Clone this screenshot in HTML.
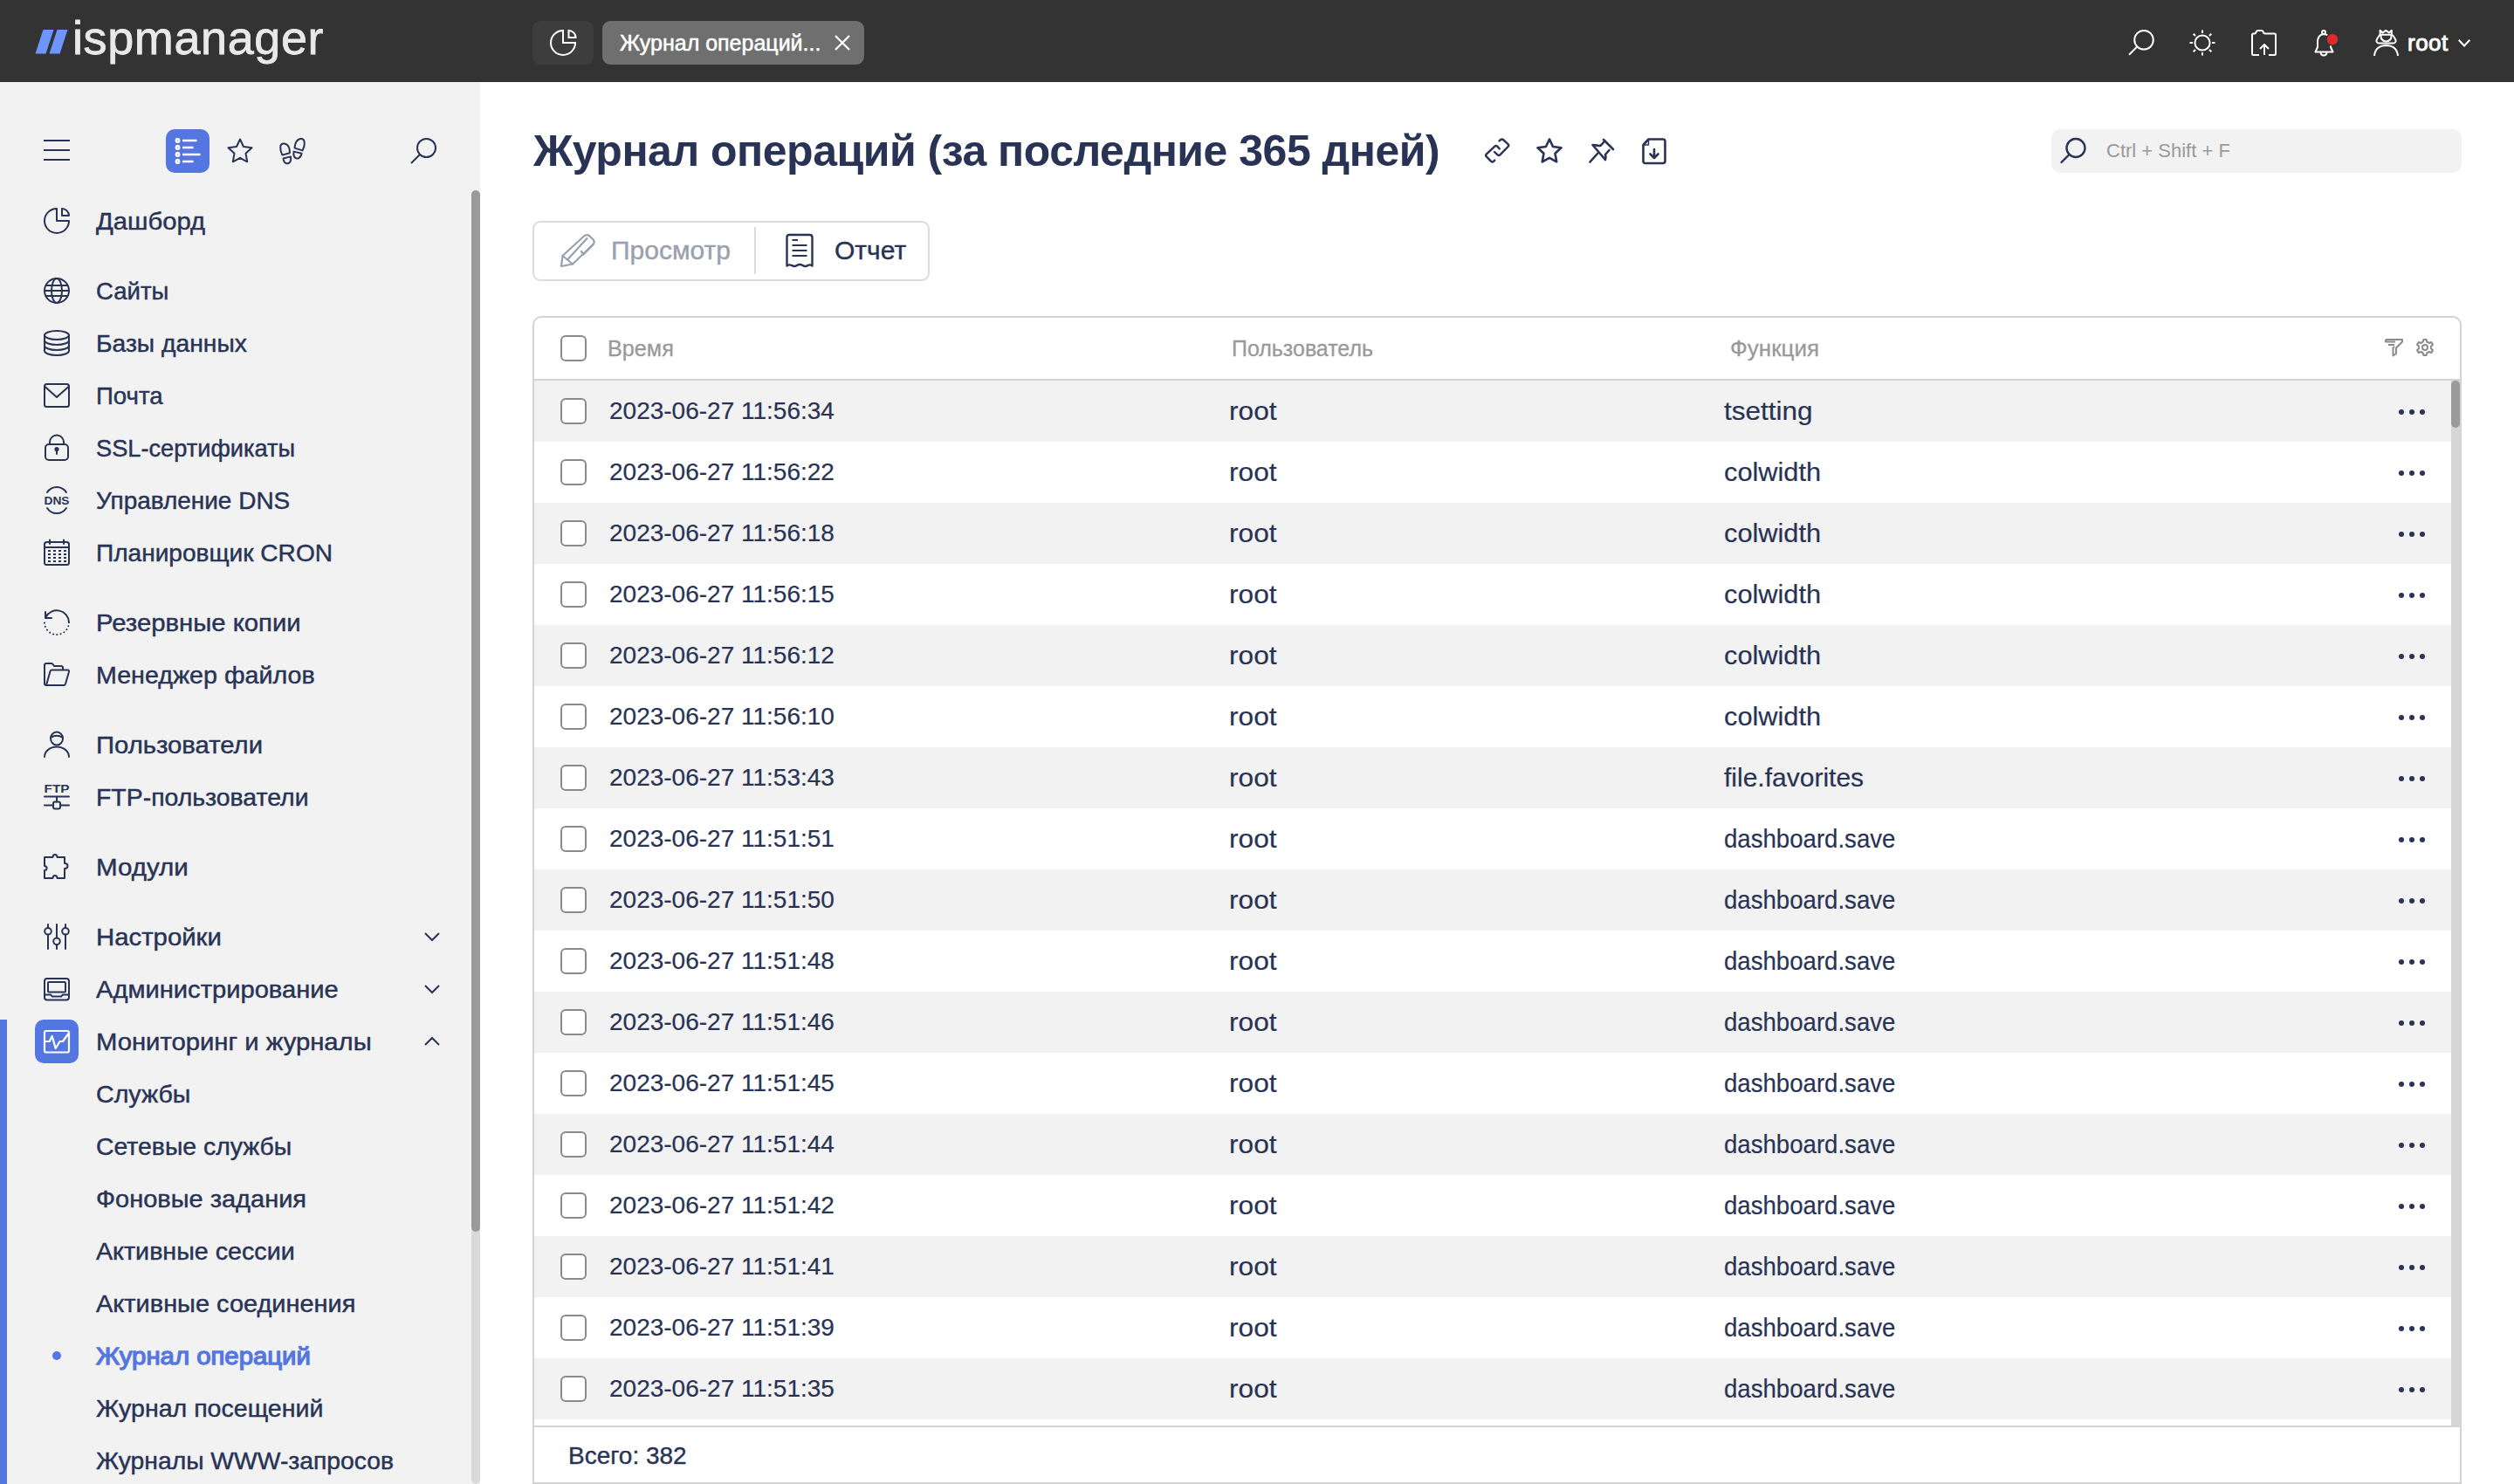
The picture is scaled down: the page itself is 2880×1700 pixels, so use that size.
<!DOCTYPE html>
<html><head><meta charset="utf-8">
<style>
*{box-sizing:border-box;margin:0;padding:0}
html,body{width:2880px;height:1700px;overflow:hidden;background:#fff;font-family:"Liberation Sans",sans-serif;color:#283355}
.abs{position:absolute}
#hdr{position:absolute;left:0;top:0;width:2880px;height:94px;background:#333333}
#side{position:absolute;left:0;top:94px;width:550px;height:1606px;background:#f2f2f2;overflow:hidden}
#main{position:absolute;left:550px;top:94px;width:2330px;height:1606px;background:#fff}
svg{position:absolute;overflow:visible}
.it{position:absolute;left:110px;font-size:28.5px;-webkit-text-stroke:0.45px currentColor;line-height:40px;white-space:nowrap;color:#283355}
.ic{position:absolute;left:50px;width:30px;height:30px}
.chev{position:absolute;left:486px;width:18px;height:10px}
.row{position:absolute;left:612px;width:2196px;height:70px}
.row.g{background:#f2f2f2}
.cb{position:absolute;left:30px;top:20px;width:30px;height:30px;border:2px solid #8a8a8a;border-radius:6px;background:#fff}
.t{position:absolute;font-size:30px;-webkit-text-stroke:0.2px currentColor;line-height:70px;top:0;white-space:nowrap;color:#283355}
.dots{position:absolute;left:2136px;top:32px;width:30px;height:6px}
.dots i{position:absolute;top:0;width:6px;height:6px;border-radius:50%;background:#283355}
</style></head><body>
<div id="hdr">
<svg style="left:0;top:0" width="100" height="94"><polygon points="49.5,34 61.5,34 52.5,61.5 40.5,61.5" fill="#6f96ff" /><polygon points="65.5,34 77.5,34 68.5,61.5 56.5,61.5" fill="#6f96ff" /></svg>
<div class="abs" id="logo" style="left:83px;top:8px;font-size:54px;line-height:70px;color:#e9e9e9;letter-spacing:0.6px;-webkit-text-stroke:0.8px #e9e9e9;white-space:nowrap">ispmanager</div>
<div class="abs" style="left:610px;top:24px;width:70px;height:50px;background:#3d3d3d;border-radius:9px"></div>
<svg style="left:630px;top:34px" width="30" height="30" viewBox="0 0 30 30" fill="none" stroke="#fff" stroke-width="2"><path d="M15 1 A14 14 0 1 0 29 15 H15 Z"/><path d="M21.5 1 A8 8 0 0 1 29.5 9 H21.5 Z"/></svg>
<div class="abs" style="left:690px;top:24px;width:300px;height:50px;background:#6f6f6f;border-radius:9px"></div>
<div class="abs" style="left:710px;top:24px;font-size:25px;line-height:50px;color:#fff;-webkit-text-stroke:0.5px #fff;white-space:nowrap">Журнал операций...</div>
<svg style="left:956px;top:40px" width="18" height="18" viewBox="0 0 18 18" stroke="#fff" stroke-width="2.2"><path d="M1 1 L17 17 M17 1 L1 17"/></svg>
<svg style="left:2438px;top:34px" width="30" height="30" viewBox="0 0 30 30" fill="none" stroke="#fff" stroke-width="2"><circle cx="18" cy="11.8" r="10.8"/><path d="M10.4 19.4 L1 28.8" stroke-linecap="butt"/></svg>
<svg style="left:2508px;top:34px" width="30" height="30" viewBox="0 0 30 30" fill="none" stroke="#fff" stroke-width="2"><circle cx="15" cy="15" r="8.6"/><path d="M15 0.5V4 M15 26V29.5 M0.5 15H4 M26 15H29.5 M4.7 4.7L7 7 M23 23L25.3 25.3 M25.3 4.7L23 7 M7 23L4.7 25.3"/></svg>
<svg style="left:2579px;top:34px" width="30" height="30" viewBox="0 0 30 30" fill="none" stroke="#fff" stroke-width="2" stroke-linejoin="round"><path d="M9 29 H2.5 Q1 29 1 27.5 V6 Q1 4.5 2.5 4.5 H4 Q5 4.5 5.5 3 L6 2 Q6.5 1 7.5 1 H12 Q13 1 13.5 2 L14.5 4 Q15 4.5 16 4.5 H26.5 Q28 4.5 28 6 V27.5 Q28 29 26.5 29 H20"/><path d="M15 29 V17 M10 22 L15 17 L20 22"/></svg>
<svg style="left:2651px;top:34px" width="30" height="30" viewBox="0 0 30 30" fill="none" stroke="#fff" stroke-width="2" stroke-linejoin="round"><circle cx="11" cy="3" r="2"/><path d="M11 5 Q4 6 4 14 V20 L1.5 25.5 H21.5 L19 20 V14 Q19 6 11 5 Z"/><path d="M7.5 25.5 Q7.5 29.5 11 29.5 Q14.5 29.5 14.5 25.5"/><circle cx="21" cy="11.2" r="7.6" fill="#333" stroke="none"/><circle cx="21" cy="11.2" r="6.2" fill="#dc2b2b" stroke="none"/></svg>
<svg style="left:2719px;top:34px" width="30" height="30" viewBox="0 0 30 30" fill="none" stroke="#fff" stroke-width="2" stroke-linejoin="round"><path d="M7.6 5.8 V0.8 L10.6 3.4 L14.2 0.9 L17.8 3.4 L20.8 0.8 V5.8 Z"/><path d="M7.5 6 Q6 7 3.5 12 Q3 15.5 7 15.5 H22 Q26 15.5 25.5 12 Q23 7 21.5 6"/><path d="M8.5 6 Q8 13 14.5 13.5 Q21 13 20.5 6"/><path d="M1 30 Q2 18.5 14.5 18 Q27 18.5 28 30"/></svg>
<div class="abs" style="left:2758px;top:24px;font-size:26px;line-height:50px;color:#fff;-webkit-text-stroke:0.9px #fff;letter-spacing:0.5px;white-space:nowrap">root</div>
<svg style="left:2816px;top:45px" width="14" height="9" viewBox="0 0 14 9" fill="none" stroke="#fff" stroke-width="2"><path d="M0.7 0.7 L7 7.5 L13.3 0.7"/></svg>
</div>
<div id="side">
<svg style="left:50px;top:66px" width="30" height="24" viewBox="0 0 30 24" stroke="#283355" stroke-width="2"><path d="M0 1H30M0 12H30M0 23H30"/></svg>
<div class="abs" style="left:190px;top:54px;width:50px;height:50px;background:#5476e0;border-radius:10px"></div>
<svg style="left:190px;top:54px" width="50" height="50" viewBox="0 0 50 50" fill="none" stroke="#fff" stroke-width="2.4"><rect x="11.8" y="11.2" width="3.4" height="3.6" rx="1.2"/><rect x="11.8" y="19.2" width="3.4" height="3.6" rx="1.2"/><rect x="11.8" y="27.2" width="3.4" height="3.6" rx="1.2"/><rect x="11.8" y="35.2" width="3.4" height="3.6" rx="1.2"/><path d="M19 13H35.5M19 21H31.5M19 29H39.5M19 37H31.5"/></svg>
<svg style="left:260px;top:64px" width="30" height="30" viewBox="0 0 30 30" fill="none" stroke="#283355" stroke-width="2" stroke-linejoin="round" stroke-linecap="round"><path d="M15 1.5 L19 10 L28.5 11.3 L21.5 17.8 L23.2 27.3 L15 22.8 L6.8 27.3 L8.5 17.8 L1.5 11.3 L11 10 Z"/></svg>
<svg style="left:320px;top:64px" width="30" height="30" viewBox="0 0 30 30" fill="none" stroke="#283355" stroke-width="2" stroke-linejoin="round" stroke-linecap="round"><path d="M3.4 19.6 Q1 14.5 1.2 10.5 Q1.5 6.3 5.3 6.5 Q9.8 6.8 11.3 11.8 Q12.2 15 11.8 17.3 Z"/><path d="M4.6 23.5 L13 21.4 Q13.8 25.5 12 28 Q10 30 7.5 29 Q5 28 4.6 23.5 Z"/><path d="M26.6 14.4 Q29.2 9.3 28.8 5.3 Q28.4 0.8 24.6 1 Q20.2 1.6 18.6 6.2 Q17.6 9.2 17.6 11.6 Z"/><path d="M16.5 15.6 L25.6 17.8 Q24.8 21.8 22.2 23.2 Q19.5 24.2 17.4 22 Q15.8 19.8 16.5 15.6 Z"/></svg>
<svg style="left:470px;top:64px" width="30" height="30" viewBox="0 0 30 30" fill="none" stroke="#283355" stroke-width="2"><circle cx="18.5" cy="11.5" r="10.5"/><path d="M11 19 L1 29"/></svg>
<div class="abs" style="left:540px;top:124px;width:10px;height:1482px;background:#d9d9d9;border-radius:5px"></div>
<div class="abs" style="left:540px;top:124px;width:10px;height:1193px;background:#9a9a9a;border-radius:5px"></div>
<div class="abs" style="left:0;top:1074px;width:8px;height:532px;background:#5476e0"></div>
<div class="abs" style="left:40px;top:1074px;width:50px;height:50px;background:#5476e0;border-radius:10px"></div>
<div class="it" style="left:110px;top:139px;color:#283355;font-weight:normal;transform:scaleX(1.025);transform-origin:0 50%">Дашборд</div>
<svg style="left:50px;top:144px" width="30" height="30" viewBox="0 0 30 30" fill="none" stroke="#283355" stroke-width="2" stroke-linejoin="round" stroke-linecap="round"><path d="M15 1 A14 14 0 1 0 29 15 H15 Z"/><path d="M21 1 A8 8 0 0 1 29 9 H21 Z"/></svg>
<div class="it" style="left:110px;top:219px;color:#283355;font-weight:normal;transform:scaleX(0.968);transform-origin:0 50%">Сайты</div>
<svg style="left:50px;top:224px" width="30" height="30" viewBox="0 0 30 30" fill="none" stroke="#283355" stroke-width="2" stroke-linejoin="round" stroke-linecap="round"><circle cx="15" cy="15" r="14"/><ellipse cx="15" cy="15" rx="6" ry="14"/><path d="M1 15H29M3 9H27M3 21H27"/></svg>
<div class="it" style="left:110px;top:279px;color:#283355;font-weight:normal;transform:scaleX(0.991);transform-origin:0 50%">Базы данных</div>
<svg style="left:50px;top:284px" width="30" height="30" viewBox="0 0 30 30" fill="none" stroke="#283355" stroke-width="2" stroke-linejoin="round" stroke-linecap="round"><ellipse cx="15" cy="6" rx="14" ry="5"/><path d="M1 6V24 A14 5 0 0 0 29 24 V6 M1 12 A14 5 0 0 0 29 12 M1 18 A14 5 0 0 0 29 18"/></svg>
<div class="it" style="left:110px;top:339px;color:#283355;font-weight:normal;transform:scaleX(0.969);transform-origin:0 50%">Почта</div>
<svg style="left:50px;top:344px" width="30" height="30" viewBox="0 0 30 30" fill="none" stroke="#283355" stroke-width="2" stroke-linejoin="round" stroke-linecap="round"><rect x="1" y="2" width="28" height="26" rx="2.5"/><path d="M1.5 5 L15 17 L28.5 5"/></svg>
<div class="it" style="left:110px;top:399px;color:#283355;font-weight:normal;transform:scaleX(0.955);transform-origin:0 50%">SSL-сертификаты</div>
<svg style="left:50px;top:404px" width="30" height="30" viewBox="0 0 30 30" fill="none" stroke="#283355" stroke-width="2" stroke-linejoin="round" stroke-linecap="round"><path d="M7 11 V8.5 A8 8 0 0 1 23 8.5 V11"/><rect x="2" y="11" width="26" height="18" rx="4"/><circle cx="15" cy="16.5" r="1.6" fill="#283355"/><path d="M15 17 V22"/></svg>
<div class="it" style="left:110px;top:459px;color:#283355;font-weight:normal;transform:scaleX(0.981);transform-origin:0 50%">Управление DNS</div>
<svg style="left:50px;top:464px" width="30" height="30" viewBox="0 0 30 30" fill="none" stroke="#283355" stroke-width="2" stroke-linejoin="round" stroke-linecap="round"><path d="M4 6 A13 13 0 0 1 26 6 M4 24 A13 13 0 0 0 26 24"/><text x="15" y="19.6" text-anchor="middle" font-family="Liberation Sans" font-weight="bold" font-size="13" fill="#283355" stroke="none" textLength="29" lengthAdjust="spacingAndGlyphs">DNS</text></svg>
<div class="it" style="left:110px;top:519px;color:#283355;font-weight:normal;transform:scaleX(0.985);transform-origin:0 50%">Планировщик CRON</div>
<svg style="left:50px;top:524px" width="30" height="30" viewBox="0 0 30 30" fill="none" stroke="#283355" stroke-width="2" stroke-linejoin="round" stroke-linecap="round"><rect x="1" y="3" width="28" height="26" rx="2.5"/><path d="M1 9H29M7 0.5V5M23 0.5V5"/><path d="M5 13H8M11 13H14M17 13H20M23 13H26M5 17H8M11 17H14M17 17H20M23 17H26M5 21H8M11 21H14M17 21H20M23 21H26M5 25H8M11 25H14M17 25H20M23 25H26" stroke-width="2.2" stroke-linecap="butt"/></svg>
<div class="it" style="left:110px;top:599px;color:#283355;font-weight:normal;transform:scaleX(1.027);transform-origin:0 50%">Резервные копии</div>
<svg style="left:50px;top:604px" width="30" height="30" viewBox="0 0 30 30" fill="none" stroke="#283355" stroke-width="2" stroke-linejoin="round" stroke-linecap="round"><path d="M2.5 9 A14 14 0 0 1 29 15"/><path d="M29 15 A14 14 0 0 1 1 15" stroke-dasharray="0.1 4.2"/><path d="M2 3 V10 H9"/></svg>
<div class="it" style="left:110px;top:659px;color:#283355;font-weight:normal;transform:scaleX(1.005);transform-origin:0 50%">Менеджер файлов</div>
<svg style="left:50px;top:664px" width="30" height="30" viewBox="0 0 30 30" fill="none" stroke="#283355" stroke-width="2" stroke-linejoin="round" stroke-linecap="round"><path d="M3 27 Q1 27 1 25 V4 Q1 2 3 2 H9 Q10 2 11 3.5 L12 5 H20 Q22 5 22 7 V9"/><path d="M3 27 L7.5 11 Q8 9.5 9.5 9.5 H27.5 Q29.5 9.5 29 11.5 L25 25.5 Q24.5 27 23 27 Z"/></svg>
<div class="it" style="left:110px;top:739px;color:#283355;font-weight:normal;transform:scaleX(1.027);transform-origin:0 50%">Пользователи</div>
<svg style="left:50px;top:744px" width="30" height="30" viewBox="0 0 30 30" fill="none" stroke="#283355" stroke-width="2" stroke-linejoin="round" stroke-linecap="round"><ellipse cx="15" cy="8" rx="7" ry="7.5"/><path d="M8.5 6.5 Q15 3 21.5 6.5"/><path d="M1 29 A14 11.5 0 0 1 29 29"/></svg>
<div class="it" style="left:110px;top:799px;color:#283355;font-weight:normal;transform:scaleX(0.997);transform-origin:0 50%">FTP-пользователи</div>
<svg style="left:50px;top:804px" width="30" height="30" viewBox="0 0 30 30" fill="none" stroke="#283355" stroke-width="2" stroke-linejoin="round" stroke-linecap="round"><text x="15" y="9.8" text-anchor="middle" font-family="Liberation Sans" font-weight="bold" font-size="12" fill="#283355" stroke="none" textLength="29" lengthAdjust="spacingAndGlyphs">FTP</text><path d="M1 14.5H29M15 14.5V20.5M1 24.5H11M19 24.5H29"/><rect x="11" y="20.5" width="8" height="8" rx="2"/></svg>
<div class="it" style="left:110px;top:879px;color:#283355;font-weight:normal;transform:scaleX(1.036);transform-origin:0 50%">Модули</div>
<svg style="left:50px;top:884px" width="30" height="30" viewBox="0 0 30 30" fill="none" stroke="#283355" stroke-width="2" stroke-linejoin="round" stroke-linecap="round"><path d="M1 4 H10.5 Q10.5 1 13 1 Q15.5 1 15.5 4 H24 V11 Q27.5 11 27.5 14 Q27.5 17 24 17 V28 H15.5 Q15.5 25 13 25 Q10.5 25 10.5 28 H1 V19 Q3.5 19 3.5 16.5 Q3.5 14 1 14 Z"/></svg>
<div class="it" style="left:110px;top:959px;color:#283355;font-weight:normal;transform:scaleX(1.029);transform-origin:0 50%">Настройки</div>
<svg style="left:50px;top:964px" width="30" height="30" viewBox="0 0 30 30" fill="none" stroke="#283355" stroke-width="2" stroke-linejoin="round" stroke-linecap="round"><path d="M5 1V5M5 12.6V29M15 1V16.5M15 24.1V29M25 1V5M25 12.6V29"/><circle cx="5" cy="8.8" r="3.8"/><circle cx="15" cy="20.3" r="3.8"/><circle cx="25" cy="8.8" r="3.8"/></svg>
<div class="it" style="left:110px;top:1019px;color:#283355;font-weight:normal;transform:scaleX(1.022);transform-origin:0 50%">Администрирование</div>
<svg style="left:50px;top:1024px" width="30" height="30" viewBox="0 0 30 30" fill="none" stroke="#283355" stroke-width="2" stroke-linejoin="round" stroke-linecap="round"><rect x="1" y="3" width="28" height="24.5" rx="3"/><rect x="5" y="7" width="20" height="11.5" rx="1"/><path d="M1 21.5 H8 L10 23.5 H20 L22 21.5 H29"/></svg>
<div class="it" style="left:110px;top:1079px;color:#283355;font-weight:normal;transform:scaleX(1.026);transform-origin:0 50%">Мониторинг и журналы</div>
<svg style="left:50px;top:1086px" width="30" height="26" viewBox="0 0 30 26" fill="none" stroke="#fff" stroke-width="2.2" stroke-linejoin="round"><rect x="1" y="1" width="28" height="24.5" rx="2"/><path d="M1.5 13 H6.7 L9.7 7 L13.7 21 L18.5 13 H21.9 L28.5 4"/></svg>
<div class="it" style="left:110px;top:1139px;color:#283355;font-weight:normal;transform:scaleX(1.004);transform-origin:0 50%">Службы</div>
<div class="it" style="left:110px;top:1199px;color:#283355;font-weight:normal;transform:scaleX(0.996);transform-origin:0 50%">Сетевые службы</div>
<div class="it" style="left:110px;top:1259px;color:#283355;font-weight:normal;transform:scaleX(1.017);transform-origin:0 50%">Фоновые задания</div>
<div class="it" style="left:110px;top:1319px;color:#283355;font-weight:normal;transform:scaleX(1.006);transform-origin:0 50%">Активные сессии</div>
<div class="it" style="left:110px;top:1379px;color:#283355;font-weight:normal;transform:scaleX(1.016);transform-origin:0 50%">Активные соединения</div>
<div class="it" style="left:110px;top:1439px;color:#5476e0;font-weight:normal;-webkit-text-stroke:1.3px #5476e0;transform:scaleX(1.029);transform-origin:0 50%">Журнал операций</div>
<div class="abs" style="left:60px;top:1454px;width:10px;height:10px;border-radius:50%;background:#5476e0"></div>
<div class="it" style="left:110px;top:1499px;color:#283355;font-weight:normal;transform:scaleX(1.002);transform-origin:0 50%">Журнал посещений</div>
<div class="it" style="left:110px;top:1559px;color:#283355;font-weight:normal;transform:scaleX(0.992);transform-origin:0 50%">Журналы WWW-запросов</div>
<svg style="left:486px;top:974px" width="18" height="10" viewBox="0 0 18 10" fill="none" stroke="#283355" stroke-width="2"><path d="M1 1 L9 9 L17 1"/></svg>
<svg style="left:486px;top:1034px" width="18" height="10" viewBox="0 0 18 10" fill="none" stroke="#283355" stroke-width="2"><path d="M1 1 L9 9 L17 1"/></svg>
<svg style="left:486px;top:1094px" width="18" height="10" viewBox="0 0 18 10" fill="none" stroke="#283355" stroke-width="2"><path d="M1 9 L9 1 L17 9"/></svg>
</div>
<div id="main">
<div class="abs" style="left:61px;top:46px;font-size:50px;line-height:66px;font-weight:bold;letter-spacing:-0.5px;color:#283355;white-space:nowrap">Журнал операций (за последние 365 дней)</div>
<svg style="left:1150px;top:64px" width="30" height="30" viewBox="0 0 30 30" fill="none" stroke="#283355" stroke-width="2.4" stroke-linejoin="round" stroke-linecap="round"><path d="M17.6 3.4 L19.2 2 Q20.6 0.8 22 2 L27.6 7.2 Q29 8.6 27.6 10 L18.4 19.4 Q17 20.8 15.6 19.4 L12 16"/><path d="M17.8 12.4 L15.2 9.6 Q13.8 8.2 12.4 9.6 L2.8 18.6 Q1.4 20 2.8 21.4 L8.2 26.8 Q9.6 28.2 11 26.8 L12.2 25.6"/></svg>
<svg style="left:1210px;top:64px" width="30" height="30" viewBox="0 0 30 30" fill="none" stroke="#283355" stroke-width="2.6" stroke-linejoin="round" stroke-linecap="round"><path d="M15 1.5 L19 10 L28.5 11.3 L21.5 17.8 L23.2 27.3 L15 22.8 L6.8 27.3 L8.5 17.8 L1.5 11.3 L11 10 Z"/></svg>
<svg style="left:1270px;top:64px" width="30" height="30" viewBox="0 0 30 30" fill="none" stroke="#283355" stroke-width="2.6" stroke-linejoin="round" stroke-linecap="round"><path d="M17 2 L28 13"/><path d="M18.5 3.5 L14 8.5 Q12 9.5 9.5 8.5 L4.5 8 L19 25 Q20 22 19 19 L23.5 14"/><path d="M10 18 L1.5 27.5"/></svg>
<svg style="left:1330px;top:64px" width="30" height="30" viewBox="0 0 30 30" fill="none" stroke="#283355" stroke-width="2.6" stroke-linejoin="round" stroke-linecap="round"><path d="M8.5 1.5 H25 Q27.5 1.5 27.5 4 V26.5 Q27.5 29 25 29 H5 Q2.5 29 2.5 26.5 V8 Z"/><path d="M8.5 1.5 V8 H2.5" stroke-width="1.5"/><path d="M15 13 V23 M10.5 18.5 L15 23 L19.5 18.5"/></svg>
<div class="abs" style="left:1800px;top:54px;width:470px;height:50px;background:#f2f2f2;border-radius:10px"></div>
<svg style="left:1810px;top:64px" width="30" height="30" viewBox="0 0 30 30" fill="none" stroke="#283355" stroke-width="2.4" stroke-linejoin="round" stroke-linecap="round"><circle cx="18" cy="11.5" r="10.5"/><path d="M10.5 19 L1.5 28"/></svg>
<div class="abs" style="left:1863px;top:54px;font-size:22px;line-height:50px;color:#9a9a9a;white-space:nowrap">Ctrl + Shift + F</div>
<div class="abs" style="left:60px;top:159px;width:455px;height:69px;border:2px solid #dcdcdc;border-radius:9px"></div>
<div class="abs" style="left:314px;top:166px;width:2px;height:54px;background:#dcdcdc"></div>
<svg style="left:92px;top:174px" width="40" height="40" viewBox="0 0 40 40" fill="none" stroke="#9aa0b0" stroke-width="2.2" stroke-linejoin="round" stroke-linecap="round"><path d="M1 37 L2.5 25 L27 2.5 Q30 0 33 2 L37.5 6.5 Q40 9.5 37.5 12 L14 34.5 Z"/><path d="M2.5 25 L14 34.5 M9 28.5 L30.5 5 M24 20 L26.5 23.5 L37.5 12"/></svg>
<div class="abs" style="left:150px;top:159px;font-size:30px;line-height:68px;color:#9aa0ad;-webkit-text-stroke:0.4px currentColor;white-space:nowrap">Просмотр</div>
<svg style="left:349px;top:173px" width="34" height="42" viewBox="0 0 34 42" fill="none" stroke="#283355" stroke-width="2.4" stroke-linejoin="round" stroke-linecap="round"><path d="M2.5 37.5 V5 Q2.5 2 5.5 2 H28.5 Q31.5 2 31.5 5 V37.5 Q29 35.5 26.5 37 Q23.5 39 20.5 37 Q17 35 14 37 Q11 39 8 37 Q5 35.5 2.5 37.5 Z"/><path d="M8.5 8 H15 M8.5 14 H25.5 M8.5 20 H25.5 M8.5 26 H25.5" stroke-linecap="butt" stroke-width="2.2"/></svg>
<div class="abs" style="left:406px;top:159px;font-size:30px;line-height:68px;color:#283355;-webkit-text-stroke:0.4px currentColor;white-space:nowrap">Отчет</div>
<div class="abs" id="tbl" style="left:60px;top:268px;width:2210px;height:1338px;border:2px solid #d4d4d4;border-radius:10px 10px 0 0;overflow:hidden">
<div class="cb" style="left:30px;top:20px"></div>
<div class="abs" style="left:86px;top:0;font-size:26px;line-height:70px;color:#999;-webkit-text-stroke:0.3px #999;white-space:nowrap;transform:scaleX(0.97);transform-origin:0 50%;margin-left:-2px">Время</div>
<div class="abs" style="left:799px;top:0;font-size:26px;line-height:70px;color:#999;-webkit-text-stroke:0.3px #999;white-space:nowrap;transform:scaleX(0.96);transform-origin:0 50%">Пользователь</div>
<div class="abs" style="left:1370px;top:0;font-size:26px;line-height:70px;color:#999;-webkit-text-stroke:0.3px #999;white-space:nowrap">Функция</div>
<svg style="left:2120px;top:24px" width="21" height="20" viewBox="0 0 21 20" fill="none" stroke="#8a8a8a" stroke-width="2" stroke-linejoin="round"><path d="M1 1 H20 V3.5 L13 10.5 V17 L9.5 19.5 V10.5 L11 9 M1 1 V3.5 H12 M4 7 H11"/></svg>
<svg style="left:2156px;top:24px" width="20" height="20" viewBox="-10 -10 20 20" fill="none" stroke="#8a8a8a" stroke-width="2" stroke-linejoin="round"><path d="M-1.6 -9 H1.6 L2.3 -6.3 L4.7 -5 L7.3 -6 L9 -3.2 L6.9 -1.3 V1.3 L9 3.2 L7.3 6 L4.7 5 L2.3 6.3 L1.6 9 H-1.6 L-2.3 6.3 L-4.7 5 L-7.3 6 L-9 3.2 L-6.9 1.3 V-1.3 L-9 -3.2 L-7.3 -6 L-4.7 -5 L-2.3 -6.3 Z"/><circle r="3"/></svg>
<div class="abs" style="left:0;top:70px;width:2210px;height:2px;background:#d4d4d4"></div>
<div class="row g" style="left:0;top:72px"><div class="cb" style="left:30px"></div><div class="t" style="left:86px;font-size:28px">2023-06-27 11:56:34</div><div class="t" style="left:796px;transform:scaleX(1.056);transform-origin:0 50%">root</div><div class="t" style="left:1363px;transform:scaleX(1.05);transform-origin:0 50%">tsetting</div><div class="dots" style="left:2136px;top:33px"><i style="left:0"></i><i style="left:12px"></i><i style="left:24px"></i></div></div>
<div class="row" style="left:0;top:142px"><div class="cb" style="left:30px"></div><div class="t" style="left:86px;font-size:28px">2023-06-27 11:56:22</div><div class="t" style="left:796px;transform:scaleX(1.056);transform-origin:0 50%">root</div><div class="t" style="left:1363px;transform:scaleX(1.025);transform-origin:0 50%">colwidth</div><div class="dots" style="left:2136px;top:33px"><i style="left:0"></i><i style="left:12px"></i><i style="left:24px"></i></div></div>
<div class="row g" style="left:0;top:212px"><div class="cb" style="left:30px"></div><div class="t" style="left:86px;font-size:28px">2023-06-27 11:56:18</div><div class="t" style="left:796px;transform:scaleX(1.056);transform-origin:0 50%">root</div><div class="t" style="left:1363px;transform:scaleX(1.025);transform-origin:0 50%">colwidth</div><div class="dots" style="left:2136px;top:33px"><i style="left:0"></i><i style="left:12px"></i><i style="left:24px"></i></div></div>
<div class="row" style="left:0;top:282px"><div class="cb" style="left:30px"></div><div class="t" style="left:86px;font-size:28px">2023-06-27 11:56:15</div><div class="t" style="left:796px;transform:scaleX(1.056);transform-origin:0 50%">root</div><div class="t" style="left:1363px;transform:scaleX(1.025);transform-origin:0 50%">colwidth</div><div class="dots" style="left:2136px;top:33px"><i style="left:0"></i><i style="left:12px"></i><i style="left:24px"></i></div></div>
<div class="row g" style="left:0;top:352px"><div class="cb" style="left:30px"></div><div class="t" style="left:86px;font-size:28px">2023-06-27 11:56:12</div><div class="t" style="left:796px;transform:scaleX(1.056);transform-origin:0 50%">root</div><div class="t" style="left:1363px;transform:scaleX(1.025);transform-origin:0 50%">colwidth</div><div class="dots" style="left:2136px;top:33px"><i style="left:0"></i><i style="left:12px"></i><i style="left:24px"></i></div></div>
<div class="row" style="left:0;top:422px"><div class="cb" style="left:30px"></div><div class="t" style="left:86px;font-size:28px">2023-06-27 11:56:10</div><div class="t" style="left:796px;transform:scaleX(1.056);transform-origin:0 50%">root</div><div class="t" style="left:1363px;transform:scaleX(1.025);transform-origin:0 50%">colwidth</div><div class="dots" style="left:2136px;top:33px"><i style="left:0"></i><i style="left:12px"></i><i style="left:24px"></i></div></div>
<div class="row g" style="left:0;top:492px"><div class="cb" style="left:30px"></div><div class="t" style="left:86px;font-size:28px">2023-06-27 11:53:43</div><div class="t" style="left:796px;transform:scaleX(1.056);transform-origin:0 50%">root</div><div class="t" style="left:1363px">file.favorites</div><div class="dots" style="left:2136px;top:33px"><i style="left:0"></i><i style="left:12px"></i><i style="left:24px"></i></div></div>
<div class="row" style="left:0;top:562px"><div class="cb" style="left:30px"></div><div class="t" style="left:86px;font-size:28px">2023-06-27 11:51:51</div><div class="t" style="left:796px;transform:scaleX(1.056);transform-origin:0 50%">root</div><div class="t" style="left:1363px;transform:scaleX(0.92);transform-origin:0 50%">dashboard.save</div><div class="dots" style="left:2136px;top:33px"><i style="left:0"></i><i style="left:12px"></i><i style="left:24px"></i></div></div>
<div class="row g" style="left:0;top:632px"><div class="cb" style="left:30px"></div><div class="t" style="left:86px;font-size:28px">2023-06-27 11:51:50</div><div class="t" style="left:796px;transform:scaleX(1.056);transform-origin:0 50%">root</div><div class="t" style="left:1363px;transform:scaleX(0.92);transform-origin:0 50%">dashboard.save</div><div class="dots" style="left:2136px;top:33px"><i style="left:0"></i><i style="left:12px"></i><i style="left:24px"></i></div></div>
<div class="row" style="left:0;top:702px"><div class="cb" style="left:30px"></div><div class="t" style="left:86px;font-size:28px">2023-06-27 11:51:48</div><div class="t" style="left:796px;transform:scaleX(1.056);transform-origin:0 50%">root</div><div class="t" style="left:1363px;transform:scaleX(0.92);transform-origin:0 50%">dashboard.save</div><div class="dots" style="left:2136px;top:33px"><i style="left:0"></i><i style="left:12px"></i><i style="left:24px"></i></div></div>
<div class="row g" style="left:0;top:772px"><div class="cb" style="left:30px"></div><div class="t" style="left:86px;font-size:28px">2023-06-27 11:51:46</div><div class="t" style="left:796px;transform:scaleX(1.056);transform-origin:0 50%">root</div><div class="t" style="left:1363px;transform:scaleX(0.92);transform-origin:0 50%">dashboard.save</div><div class="dots" style="left:2136px;top:33px"><i style="left:0"></i><i style="left:12px"></i><i style="left:24px"></i></div></div>
<div class="row" style="left:0;top:842px"><div class="cb" style="left:30px"></div><div class="t" style="left:86px;font-size:28px">2023-06-27 11:51:45</div><div class="t" style="left:796px;transform:scaleX(1.056);transform-origin:0 50%">root</div><div class="t" style="left:1363px;transform:scaleX(0.92);transform-origin:0 50%">dashboard.save</div><div class="dots" style="left:2136px;top:33px"><i style="left:0"></i><i style="left:12px"></i><i style="left:24px"></i></div></div>
<div class="row g" style="left:0;top:912px"><div class="cb" style="left:30px"></div><div class="t" style="left:86px;font-size:28px">2023-06-27 11:51:44</div><div class="t" style="left:796px;transform:scaleX(1.056);transform-origin:0 50%">root</div><div class="t" style="left:1363px;transform:scaleX(0.92);transform-origin:0 50%">dashboard.save</div><div class="dots" style="left:2136px;top:33px"><i style="left:0"></i><i style="left:12px"></i><i style="left:24px"></i></div></div>
<div class="row" style="left:0;top:982px"><div class="cb" style="left:30px"></div><div class="t" style="left:86px;font-size:28px">2023-06-27 11:51:42</div><div class="t" style="left:796px;transform:scaleX(1.056);transform-origin:0 50%">root</div><div class="t" style="left:1363px;transform:scaleX(0.92);transform-origin:0 50%">dashboard.save</div><div class="dots" style="left:2136px;top:33px"><i style="left:0"></i><i style="left:12px"></i><i style="left:24px"></i></div></div>
<div class="row g" style="left:0;top:1052px"><div class="cb" style="left:30px"></div><div class="t" style="left:86px;font-size:28px">2023-06-27 11:51:41</div><div class="t" style="left:796px;transform:scaleX(1.056);transform-origin:0 50%">root</div><div class="t" style="left:1363px;transform:scaleX(0.92);transform-origin:0 50%">dashboard.save</div><div class="dots" style="left:2136px;top:33px"><i style="left:0"></i><i style="left:12px"></i><i style="left:24px"></i></div></div>
<div class="row" style="left:0;top:1122px"><div class="cb" style="left:30px"></div><div class="t" style="left:86px;font-size:28px">2023-06-27 11:51:39</div><div class="t" style="left:796px;transform:scaleX(1.056);transform-origin:0 50%">root</div><div class="t" style="left:1363px;transform:scaleX(0.92);transform-origin:0 50%">dashboard.save</div><div class="dots" style="left:2136px;top:33px"><i style="left:0"></i><i style="left:12px"></i><i style="left:24px"></i></div></div>
<div class="row g" style="left:0;top:1192px"><div class="cb" style="left:30px"></div><div class="t" style="left:86px;font-size:28px">2023-06-27 11:51:35</div><div class="t" style="left:796px;transform:scaleX(1.056);transform-origin:0 50%">root</div><div class="t" style="left:1363px;transform:scaleX(0.92);transform-origin:0 50%">dashboard.save</div><div class="dots" style="left:2136px;top:33px"><i style="left:0"></i><i style="left:12px"></i><i style="left:24px"></i></div></div>
<div class="abs" style="left:2196px;top:72px;width:10px;height:1197px;background:#d6d6d6"></div>
<div class="abs" style="left:2196px;top:72px;width:10px;height:54px;background:#9a9a9a;border-radius:5px"></div>
<div class="abs" style="left:0;top:1269px;width:2210px;height:2px;background:#d4d4d4"></div>
<div class="abs" style="left:39px;top:1272px;font-size:28px;line-height:63px;color:#283355;-webkit-text-stroke:0.4px currentColor;white-space:nowrap">Всего: 382</div>
</div>
</div>
</body></html>
